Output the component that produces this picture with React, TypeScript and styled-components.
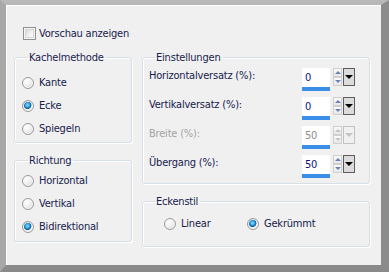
import React from 'react';
import styled, { createGlobalStyle } from 'styled-components';

const Global = createGlobalStyle`
  html, body { margin: 0; padding: 0; background: #f0f0f0; }
  body {
    font-family: Tahoma, "DejaVu Sans Condensed", "Liberation Sans", sans-serif;
    font-size: 11px;
    letter-spacing: -0.2px;
    color: #16214d;
  }
`;

const Frame = styled.div`
  box-sizing: border-box;
  width: 389px;
  height: 272px;
  border-style: solid;
  border-width: 5px 8px 7px 6px;
  border-color: #b8b8b8 #8c8c8c #8a8a8a #a8a8a8;
  background: #f0f0f0;
  box-shadow: inset 1px 1px 0 #ffffff;
  display: flex;
  flex-direction: column;
`;

const CheckRow = styled.label`
  display: flex;
  align-items: center;
  gap: 3px;
  margin: 22px 0 0 17px;
  height: 13px;
  line-height: 13px;
`;

const CheckBox = styled.span`
  box-sizing: border-box;
  width: 13px;
  height: 13px;
  border: 1px solid #8e8f8f;
  background: linear-gradient(135deg, #cfcfcf 0%, #f4f4f4 60%, #ffffff 100%);
  box-shadow: inset 0 0 0 1px #f6f6f6, inset 0 0 0 2px #d4d4d4;
`;

const Columns = styled.div`
  display: grid;
  grid-template-columns: 118px 228px;
  column-gap: 10px;
  margin: 11px 0 0 8px;
`;

const Column = styled.div`
  display: flex;
  flex-direction: column;
  gap: 11px;
`;

const Group = styled.fieldset<{ $pt: number; $pb: number; $pl?: number }>`
  margin: 0;
  min-width: 0;
  border: 1px solid #d5dfe5;
  border-radius: 3px;
  box-shadow: inset 1px 1px 0 #ffffff, 1px 1px 0 #ffffff;
  padding: ${(p) => p.$pt}px 0 ${(p) => p.$pb}px ${(p) => p.$pl ?? 7}px;
`;

const Legend = styled.legend`
  margin-left: 6px;
  padding: 0 2px 0 1px;
  line-height: 13px;
  height: 13px;
  color: #16214d;
`;

const RadioRow = styled.label`
  display: flex;
  align-items: center;
  gap: 5px;
  height: 23px;
  line-height: 13px;
`;

const Radio = styled.span<{ $on?: boolean }>`
  box-sizing: border-box;
  width: 12px;
  height: 12px;
  border-radius: 50%;
  border: 1px solid #9a9a9a;
  background: ${(p) =>
    p.$on
      ? 'radial-gradient(circle at 45% 40%, #8fe0ff 0%, #2a9be0 30%, #0b4f8c 45%, #f2f2f2 52%, #e2e2e2 100%)'
      : 'radial-gradient(circle at 35% 30%, #ffffff 0%, #f2f2f2 40%, #d0d0d0 100%)'};
  box-shadow: inset 0 0 0 1px #f8f8f8;
`;

const HRadios = styled.div`
  display: flex;
  padding-left: 15px;
`;

const HOption = styled(RadioRow)<{ $w?: number }>`
  width: ${(p) => (p.$w ? `${p.$w}px` : 'auto')};
`;

const FieldRow = styled.div`
  display: flex;
  align-items: flex-start;
  height: 29px;
`;

const FieldLabel = styled.span<{ $disabled?: boolean }>`
  padding-top: 2px;
  line-height: 13px;
  color: ${(p) => (p.$disabled ? '#a3a3a3' : '#16214d')};
`;

const Spinner = styled.div`
  display: flex;
  align-items: flex-start;
  margin-left: auto;
  margin-right: 14px;
  padding-top: 1px;
`;

const SpinInput = styled.div<{ $disabled?: boolean }>`
  box-sizing: border-box;
  width: 28px;
  height: 23px;
  background: #ffffff;
  border-bottom: 4px solid #3a8ee8;
  padding: 3px 0 0 3px;
  line-height: 13px;
  color: ${(p) => (p.$disabled ? '#8c8c8c' : '#10107a')};
`;

const SpinButtons = styled.div`
  display: flex;
  flex-direction: column;
  margin-left: 3px;
`;

const SpinHalf = styled.div`
  box-sizing: border-box;
  width: 9px;
  height: 9px;
  border: 1px solid #cfcfcf;
  background: linear-gradient(#fbfbfb, #e8e8e8);
  display: flex;
  align-items: center;
  justify-content: center;
`;

const ArrowUp = styled.span<{ $disabled?: boolean }>`
  width: 0;
  height: 0;
  border-left: 3px solid transparent;
  border-right: 3px solid transparent;
  border-bottom: 3px solid ${(p) => (p.$disabled ? '#c4c4c4' : '#6e80b8')};
`;

const ArrowDown = styled.span<{ $disabled?: boolean }>`
  width: 0;
  height: 0;
  border-left: 3px solid transparent;
  border-right: 3px solid transparent;
  border-top: 3px solid ${(p) => (p.$disabled ? '#c4c4c4' : '#6e80b8')};
`;

const DropButton = styled.div<{ $disabled?: boolean }>`
  box-sizing: border-box;
  width: 12px;
  height: 18px;
  margin-left: 1px;
  border: 1px solid ${(p) => (p.$disabled ? '#c2c2c2' : '#5c5c5c')};
  background: ${(p) => (p.$disabled ? '#f0f0f0' : '#dcdcdc')};
  display: flex;
  align-items: center;
  justify-content: center;
`;

const DropArrow = styled.span<{ $disabled?: boolean }>`
  width: 0;
  height: 0;
  border-left: 4px solid transparent;
  border-right: 4px solid transparent;
  border-top: 4px solid ${(p) => (p.$disabled ? '#c4c4c4' : '#000000')};
`;

function SpinField({ label, value, disabled }: { label: string; value: string; disabled?: boolean }) {
  return (
    <FieldRow>
      <FieldLabel $disabled={disabled}>{label}</FieldLabel>
      <Spinner>
        <SpinInput $disabled={disabled}>{value}</SpinInput>
        <SpinButtons>
          <SpinHalf>
            <ArrowUp $disabled={disabled} />
          </SpinHalf>
          <SpinHalf>
            <ArrowDown $disabled={disabled} />
          </SpinHalf>
        </SpinButtons>
        <DropButton $disabled={disabled}>
          <DropArrow $disabled={disabled} />
        </DropButton>
      </Spinner>
    </FieldRow>
  );
}

export default function App() {
  return (
    <>
      <Global />
      <Frame>
        <CheckRow>
          <CheckBox />
          Vorschau anzeigen
        </CheckRow>
        <Columns>
          <Column>
            <Group $pt={7} $pb={2}>
              <Legend>Kachelmethode</Legend>
              <RadioRow>
                <Radio />
                Kante
              </RadioRow>
              <RadioRow>
                <Radio $on />
                Ecke
              </RadioRow>
              <RadioRow>
                <Radio />
                Spiegeln
              </RadioRow>
            </Group>
            <Group $pt={2} $pb={3}>
              <Legend>Richtung</Legend>
              <RadioRow>
                <Radio />
                Horizontal
              </RadioRow>
              <RadioRow>
                <Radio />
                Vertikal
              </RadioRow>
              <RadioRow>
                <Radio $on />
                Bidirektional
              </RadioRow>
            </Group>
          </Column>
          <Column>
            <Group $pt={3} $pb={0} $pl={6}>
              <Legend>Einstellungen</Legend>
              <SpinField label="Horizontalversatz (%):" value="0" />
              <SpinField label="Vertikalversatz (%):" value="0" />
              <SpinField label="Breite (%):" value="50" disabled />
              <SpinField label="Übergang (%):" value="50" />
            </Group>
            <Group $pt={4} $pb={11} $pl={6}>
              <Legend>Eckenstil</Legend>
              <HRadios>
                <HOption $w={83}>
                  <Radio />
                  Linear
                </HOption>
                <HOption>
                  <Radio $on />
                  Gekrümmt
                </HOption>
              </HRadios>
            </Group>
          </Column>
        </Columns>
      </Frame>
    </>
  );
}
